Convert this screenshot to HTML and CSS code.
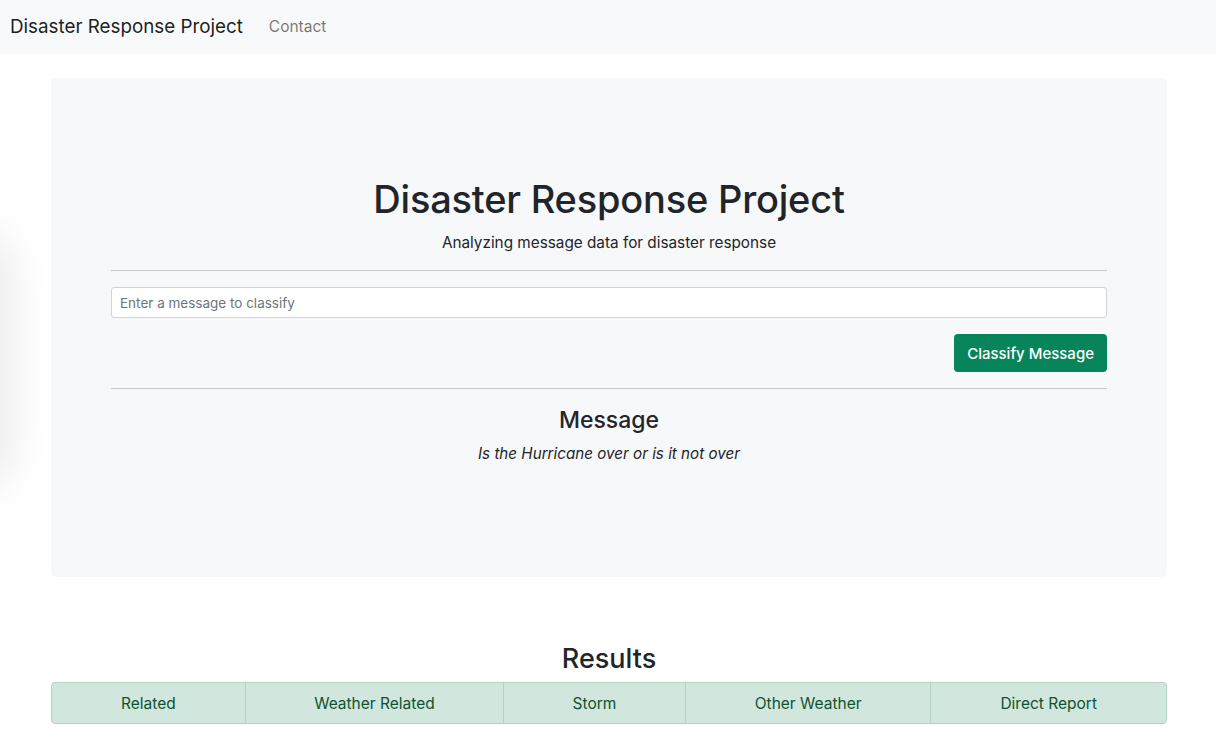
FILE: index.html
```html
<!DOCTYPE html>
<html lang="en">
<head>
<meta charset="utf-8">
<title>Disaster Response Project</title>
<link rel="stylesheet" href="styles.css">
</head>
<body>
<nav class="navbar">
  <a class="brand" href="#">Disaster Response Project</a>
  <a class="nav-link" href="#">Contact</a>
</nav>
<div class="edge-shadow"></div>
<main class="container">
  <section class="jumbotron">
    <h1 class="title">Disaster Response Project</h1>
    <p class="lead">Analyzing message data for disaster response</p>
    <hr class="rule">
    <form class="classify-form">
      <input class="form-control" type="text" placeholder="Enter a message to classify">
      <div class="form-actions">
        <button class="btn-success" type="button">Classify Message</button>
      </div>
    </form>
    <hr class="rule rule-low">
    <h3 class="msg-title">Message</h3>
    <p class="msg-text">Is the Hurricane over or is it not over</p>
  </section>
  <h2 class="results-title">Results</h2>
  <table class="results">
    <tr>
      <td class="c1">Related</td>
      <td class="c2">Weather Related</td>
      <td class="c3">Storm</td>
      <td class="c4">Other Weather</td>
      <td class="c5">Direct Report</td>
    </tr>
  </table>
</main>
</body>
</html>
```
FILE: styles.css
```css
* { box-sizing: border-box; }
html, body { margin: 0; padding: 0; }
body {
  font-family: Inter, "Noto Sans", "Liberation Sans", sans-serif;
  font-size: 16px;
  line-height: 1.5;
  color: #212529;
  background: #fff;
  overflow: hidden;
}
a { text-decoration: none; }
.navbar {
  height: 54px;
  background: #f8f9fa;
  display: flex;
  align-items: center;
  padding: 0 10px;
}
.brand {
  font-size: 18.8px;
  color: rgba(0,0,0,.9);
  margin-right: 26px;
}
.nav-link {
  color: rgba(0,0,0,.55);
  font-size: 15.5px;
}
.edge-shadow {
  position: fixed;
  left: -60px;
  top: 240px;
  width: 60px;
  height: 240px;
  border-radius: 30px;
  box-shadow: 0 0 45px 10px rgba(0,0,0,.09);
}
.container {
  margin: 24px 49px 0 51px;
}
.jumbotron {
  background: #f7f8fa;
  border-radius: 5px;
  padding: 98px 60px 111px;
  text-align: center;
}
.title {
  margin: 0;
  font-size: 38px;
  font-weight: 500;
  line-height: 46px;
  letter-spacing: -0.2px;
}
.lead {
  margin: 9px 0 0;
  font-size: 15.3px;
  line-height: 24px;
}
.rule {
  border: 0;
  border-top: 1px solid #c4c5c7;
  margin: 15px 0 16px;
}
.rule-low { margin-top: 16px; }
.classify-form { margin: 0; }
.form-control {
  display: block;
  width: 100%;
  height: 31px;
  padding: 4px 8px;
  font-family: inherit;
  font-size: 13.5px;
  color: #495057;
  background: #fff;
  border: 1px solid #ced4da;
  border-radius: 3px;
}
.form-control::placeholder { color: #6c757d; }
.form-actions {
  display: flex;
  justify-content: flex-end;
  margin-top: 16px;
}
.btn-success {
  height: 38px;
  padding: 0 13px;
  background: #08845a;
  border: 0;
  border-radius: 4px;
  color: #fff;
  font-family: inherit;
  font-size: 15px;
  font-weight: 500;
}
.msg-title {
  margin: 0;
  font-size: 23px;
  font-weight: 500;
  line-height: 30px;
}
.msg-text {
  margin: 7px 0 0;
  font-style: italic;
  font-size: 15.2px;
  line-height: 24px;
}
.results-title {
  margin: 64px 0 5px;
  text-align: center;
  font-size: 27px;
  font-weight: 500;
  line-height: 36px;
}
.results {
  width: 100%;
  border-collapse: separate;
  border-spacing: 0;
  background: #d1e7dd;
  border: 1px solid #b3d2c3;
  border-radius: 4px;
  color: #0f5132;
  font-size: 15.5px;
}
.results td {
  text-align: center;
  height: 40px;
  padding: 1px 0 0;
  border-left: 1px solid #b3d2c3;
}
.results td:first-child { border-left: 0; }
.c1 { width: 193px; }
.c2 { width: 259px; }
.c3 { width: 182px; }
.c4 { width: 246px; }
.c5 { width: 236px; }
```
